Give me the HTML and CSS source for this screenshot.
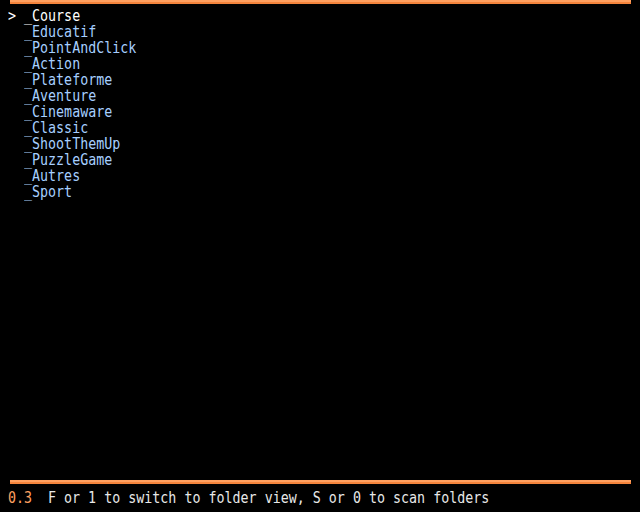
FILE: index.html
```html
<!DOCTYPE html>
<html>
<head>
<meta charset="utf-8">
<link rel="stylesheet" href="styles.css">
</head>
<body>
<div class="screen">
  <div class="bar"></div>
  <ul class="list">
    <li class="row current"><span class="cursor">&gt;</span><span class="name">_Course</span></li>
    <li class="row"><span class="cursor"></span><span class="name">_Educatif</span></li>
    <li class="row"><span class="cursor"></span><span class="name">_PointAndClick</span></li>
    <li class="row"><span class="cursor"></span><span class="name">_Action</span></li>
    <li class="row"><span class="cursor"></span><span class="name">_Plateforme</span></li>
    <li class="row"><span class="cursor"></span><span class="name">_Aventure</span></li>
    <li class="row"><span class="cursor"></span><span class="name">_Cinemaware</span></li>
    <li class="row"><span class="cursor"></span><span class="name">_Classic</span></li>
    <li class="row"><span class="cursor"></span><span class="name">_ShootThemUp</span></li>
    <li class="row"><span class="cursor"></span><span class="name">_PuzzleGame</span></li>
    <li class="row"><span class="cursor"></span><span class="name">_Autres</span></li>
    <li class="row"><span class="cursor"></span><span class="name">_Sport</span></li>
  </ul>
  <div class="bar"></div>
  <div class="status"><span class="version">0.3</span><span class="help">F or 1 to switch to folder view, S or 0 to scan folders</span></div>
</div>
</body>
</html>
```
FILE: styles.css
```css
html, body {
  margin: 0;
  padding: 0;
  background: #000;
}
.screen {
  width: 640px;
  height: 512px;
  display: flex;
  flex-direction: column;
  background: #000;
  font-family: "DejaVu Sans Mono", "Liberation Mono", monospace;
  font-size: 13.33px;
  overflow: hidden;
}
.bar {
  height: 4px;
  margin-left: 10px;
  width: 621px;
  background: linear-gradient(#ffa060 0, #ffa060 2px, #f4843c 2px, #f4843c 4px);
  flex: none;
}
.list {
  list-style: none;
  margin: 4px 0 0 0;
  padding: 0 0 0 8px;
  flex: 1;
}
.row {
  display: flex;
  height: 16px;
  line-height: 16px;
  white-space: pre;
  color: #a6cfff;
  transform: scaleY(1.15);
}
.row.current {
  color: #ffffff;
}
.cursor {
  width: 16px;
  flex: none;
  color: #ffffff;
}
.status {
  height: 16px;
  line-height: 16px;
  margin: 6px 0 6px 0;
  padding-left: 8px;
  display: flex;
  white-space: pre;
  transform: scaleY(1.15);
}
.version {
  color: #ffa060;
  width: 40px;
  flex: none;
}
.help {
  color: #e8e8e8;
}
```
